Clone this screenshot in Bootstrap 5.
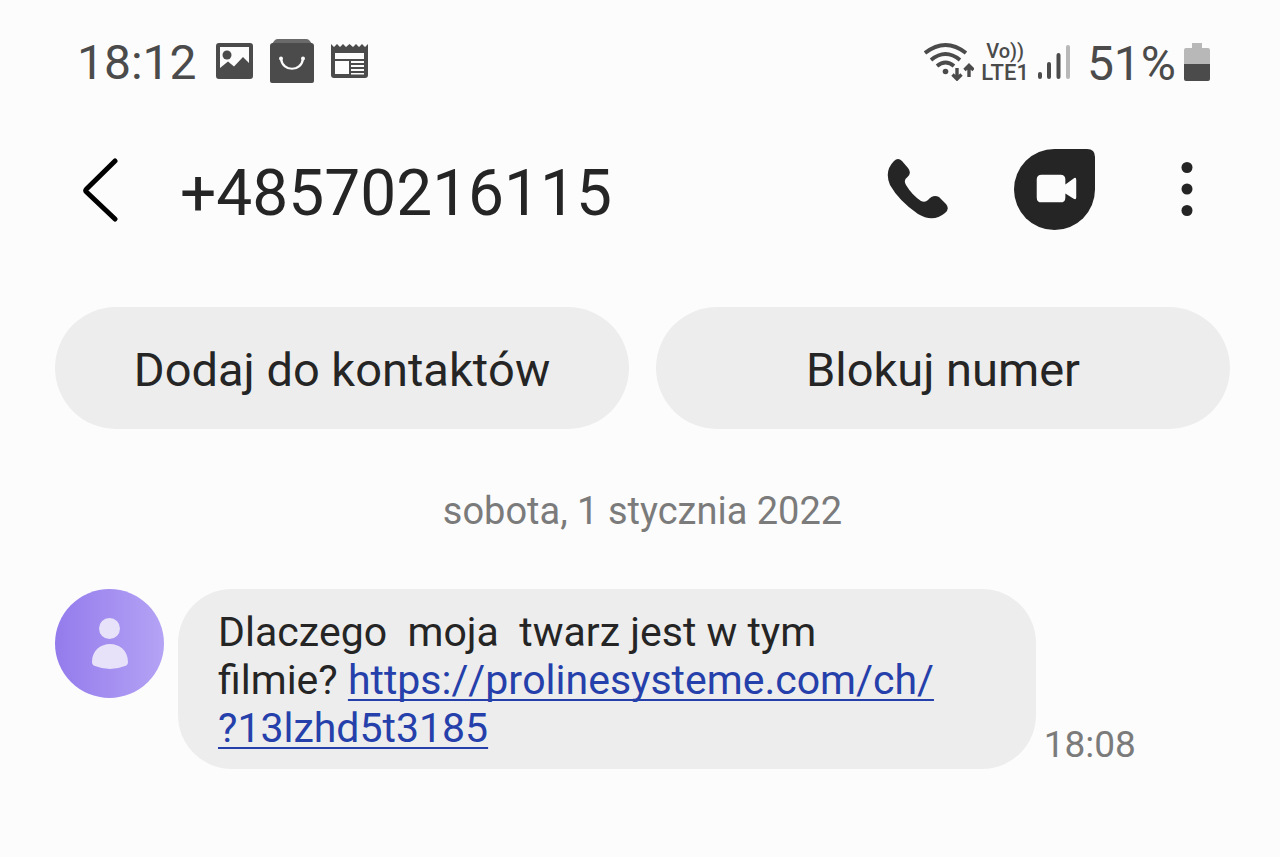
<!DOCTYPE html>
<html lang="pl">
<head>
<meta charset="utf-8">
<meta name="viewport" content="width=device-width, initial-scale=1">
<title>+48570216115</title>
<link href="https://cdn.jsdelivr.net/npm/bootstrap@5.3.0/dist/css/bootstrap.min.css" rel="stylesheet">
<style>
  body { background: #fcfcfc; color: #252525; font-family: Roboto, "Liberation Sans", sans-serif; }
  svg { display: block; flex: none; }
  .screen { padding: 32px 50px 48px 55px; }
  .status { height: 60px; padding: 2px 20px 0 22px; color: #4b4b4b; font-size: 48px; line-height: 60px; }
  .status-icons { gap: 17px; margin: 0 0 5px 19px; }
  .status-system { margin-bottom: 2px; }
  .network { font-size: 22px; line-height: 22px; font-weight: 500; margin: 0 8px 0 7px; }
  .network-voice { font-size: 20px; }
  .topbar { height: 122px; margin-top: 36px; padding: 0 37px 0 21px; }
  .topbar h1 { font-size: 64px; line-height: 72px; font-weight: 400; margin: 10px 0 0 54px; }
  .icon-btn { border: 0; padding: 0; background: none; color: #252525; }
  .video { margin: 0 86px 0 65px; }
  .actions { gap: 27px; margin-top: 57px; }
  .pill { --bs-btn-bg: #ededed; --bs-btn-color: #252525; --bs-btn-hover-bg: #e2e2e2; --bs-btn-active-bg: #dadada;
          height: 122px; font-size: 47px; line-height: 60px; border: 0; padding-top: 10px; flex: 1 1 0; font-kerning: none; }
  .day { color: #7b7b7b; font-size: 38px; line-height: 48px; margin-top: 58px; }
  .thread { margin-top: 54px; }
  .bubble { width: 73%; margin-left: 14px; padding: 19px 40px 17px; background: #ededed; border-radius: 54px;
            font-size: 41px; line-height: 48px; white-space: pre-wrap; font-kerning: none; }
  .bubble a { color: #2540ab; text-decoration-thickness: 2px; text-underline-offset: 5px; text-decoration-skip-ink: none; }
  .sent { color: #7b7b7b; font-size: 37px; line-height: 48px; margin-left: 8px; }
</style>
</head>
<body>
<main class="screen">
  <div class="status d-flex align-items-center">
    <span>18:12</span>
    <div class="status-icons d-flex align-items-center">
      <svg width="37" height="36" viewBox="0 0 37 36" aria-hidden="true">
        <path fill="#4b4b4b" fill-rule="evenodd" d="M3 0H34Q37 0 37 3V33Q37 36 34 36H3Q0 36 0 33V3Q0 0 3 0ZM4 4V25L12 18.500L18 23.500L27 14L33 20V4Z"/>
        <circle cx="11" cy="12" r="4.500" fill="#4b4b4b"/>
      </svg>
      <svg width="44" height="44" viewBox="0 0 44 44" aria-hidden="true">
        <path fill="#6a6a6a" d="M1 6L5 1Q6 0 8 0H36Q38 0 39 1L43 6Z"/>
        <path fill="#4b4b4b" d="M3 4H41Q44 4 44 7V42Q44 44 42 44H2Q0 44 0 42V7Q0 4 3 4Z"/>
        <path d="M11 20C13 33 31 33 33 20" fill="none" stroke="#fcfcfc" stroke-width="2.200"/>
        <circle cx="11" cy="19.500" r="2" fill="#fcfcfc"/><circle cx="33" cy="19.500" r="2" fill="#fcfcfc"/>
      </svg>
      <svg width="37" height="34" viewBox="0 0 37 34" aria-hidden="true">
        <path fill="#4b4b4b" fill-rule="evenodd" d="M0 0L3 3L6 0L9 3L12 0L15 3L18.500 0L22 3L25 0L28 3L31 0L34 3L37 0V31Q37 34 34 34H3Q0 34 0 31ZM4 9V15H33V9ZM4 17V30H18V17ZM20 17V19H33V17ZM20 21V23H33V21ZM20 25V27H33V25ZM20 29V30.500H33V29Z"/>
      </svg>
    </div>
    <div class="status-system d-flex align-items-center ms-auto">
      <svg width="50" height="38" viewBox="0 0 50 38" fill="none" stroke="#4b4b4b" stroke-width="3.800" aria-label="Wi-Fi" role="img">
        <path d="M1 10Q21.500 -6 42 10M7 17Q21.500 5 36 17M13 23Q21.500 16 30 23"/>
        <circle cx="21.500" cy="28.500" r="2.800" fill="#4b4b4b" stroke="none"/>
        <path stroke-width="3.400" d="M33 25V36M28.500 31.500L33 36L37.500 31.500M45 34V22M40.500 27L45 22.500L49.500 27"/>
      </svg>
      <div class="network text-center"><span class="network-voice d-block">Vo))</span><span class="d-block">LTE1</span></div>
      <svg width="34" height="36" viewBox="0 0 34 36" stroke-width="4" stroke-linecap="round" stroke="#4b4b4b" aria-label="Sygnał" role="img">
        <path d="M3 30V33M12 20V33M21.500 11V33"/><path stroke="#b8b8b8" d="M31 3V33"/>
      </svg>
      <span class="ms-3 pt-1">51%</span>
      <svg class="ms-2" width="26" height="38" viewBox="0 0 26 38" aria-label="Bateria" role="img">
        <path fill="#b8b8b8" d="M8 0H18V5H24Q26 5 26 7V22H0V7Q0 5 2 5H8Z"/>
        <path fill="#4b4b4b" d="M0 21H26V36Q26 38 24 38H2Q0 38 0 36Z"/>
      </svg>
    </div>
  </div>

  <header class="topbar d-flex align-items-center">
    <button class="icon-btn" type="button" aria-label="Wstecz">
      <svg width="50" height="66" viewBox="0 0 50 66" fill="none" stroke="#000" stroke-width="5" stroke-linecap="round" stroke-linejoin="round"><path d="M39 5L10.500 33Q9 34.500 10.500 36L39 63"/></svg>
    </button>
    <h1>+48570216115</h1>
    <div class="d-flex align-items-center ms-auto">
      <button class="icon-btn" type="button" aria-label="Zadzwoń">
        <svg width="62" height="62" viewBox="0 0 62 62" fill="currentColor"><path d="M7 3Q11 -1 15 3L21 10Q25 15 20.500 19Q16 22 19 27Q25 37 34 43Q38 45 41 42Q46 36 52 39L59 46Q63 51 58 55Q46 65 31 56Q12 43 3 27Q-3 13 7 3Z"/></svg>
      </button>
      <button class="icon-btn video" type="button" aria-label="Rozmowa wideo">
        <svg width="81" height="81" viewBox="0 0 82 82" fill="currentColor"><path d="M41 0H74Q82 0 82 8V41A41 41 0 1 1 41 0Z"/><path fill="#fcfcfc" d="M28 26H47Q52 26 52 31V36L60 30Q63 28 63 31V49Q63 52 60 50L52 45V49Q52 54 47 54H28Q23 54 23 49V31Q23 26 28 26Z"/></svg>
      </button>
      <button class="icon-btn" type="button" aria-label="Więcej opcji">
        <svg width="12" height="56" viewBox="0 0 12 56" fill="currentColor"><circle cx="6" cy="6.500" r="5.500"/><circle cx="6" cy="28" r="5.500"/><circle cx="6" cy="49.500" r="5.500"/></svg>
      </button>
    </div>
  </header>

  <div class="actions d-flex">
    <button class="pill btn rounded-pill" type="button">Dodaj do kontaktów</button>
    <button class="pill btn rounded-pill" type="button">Blokuj numer</button>
  </div>

  <div class="day text-center">sobota, 1 stycznia 2022</div>

  <div class="thread d-flex align-items-start">
    <svg width="109" height="109" viewBox="0 0 109 109" aria-hidden="true">
      <defs><linearGradient id="violet"><stop offset="0" stop-color="#947bec"/><stop offset="1" stop-color="#b4a3f5"/></linearGradient></defs>
      <circle cx="54.500" cy="54.500" r="54.500" fill="url(#violet)"/>
      <g fill="#e7e1f9"><circle cx="54.500" cy="39.500" r="10.500"/><path d="M37 73C37 49 73 49 73 73Q73 76 70 77Q55 83 40 77Q37 76 37 73Z"/></g>
    </svg>
    <div class="bubble">Dlaczego  moja  twarz jest w tym<br>filmie? <a href="#">https://prolinesysteme.com/ch/<br>?13lzhd5t3185</a></div>
    <time class="sent align-self-end">18:08</time>
  </div>
</main>
<script src="https://cdn.jsdelivr.net/npm/bootstrap@5.3.0/dist/js/bootstrap.bundle.min.js"></script>
</body>
</html>
